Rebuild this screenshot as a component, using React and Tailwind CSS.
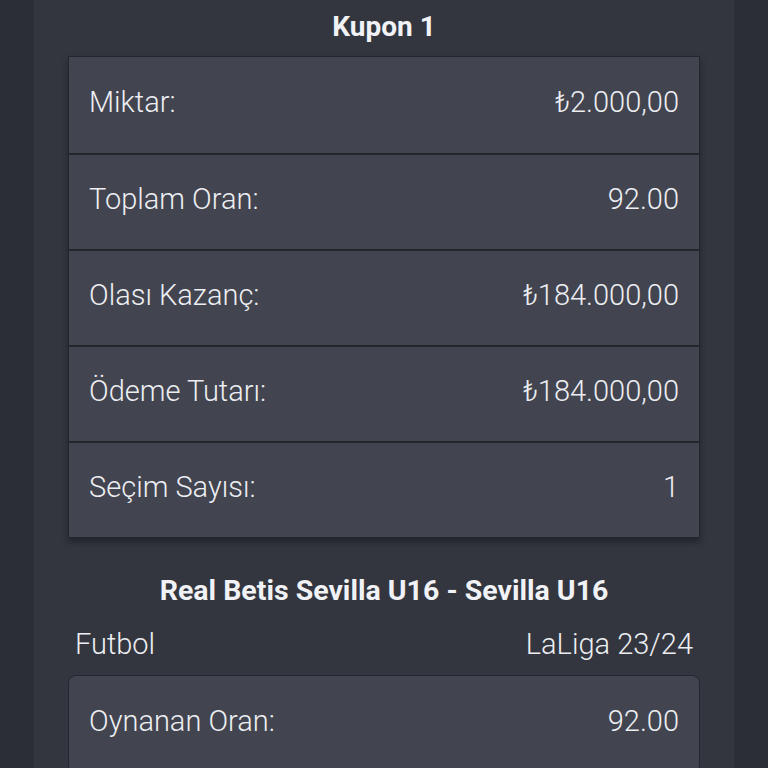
const rows = [
  { label: 'Miktar:', value: '₺2.000,00' },
  { label: 'Toplam Oran:', value: '92.00' },
  { label: 'Olası Kazanç:', value: '₺184.000,00' },
  { label: 'Ödeme Tutarı:', value: '₺184.000,00' },
  { label: 'Seçim Sayısı:', value: '1' },
];

function Row({ label, value, first }) {
  return (
    <div
      className={`flex h-[96px] items-center justify-between bg-[#42444f] px-[20px] pb-[4px] text-[29px] font-light text-[#eceef2] ${
        first ? '' : 'border-t-2 border-[#25272d]'
      }`}
    >
      <span>{label}</span>
      <span>{value}</span>
    </div>
  );
}

export default function App() {
  return (
    <div className="flex h-[768px] justify-center overflow-hidden bg-[#2b2e36] font-['Roboto',sans-serif]">
      <div className="w-[700px] bg-[#33363f] px-[34px]">
        <h2 className="pt-[7px] pb-[9px] text-center text-[28px] leading-[40px] font-bold text-[#f1f2f5]">Kupon 1</h2>
        <div className="overflow-hidden border border-[#25272d] shadow-[0_4px_6px_rgba(0,0,0,0.35)]">
          {rows.map((r, i) => (
            <Row key={r.label} label={r.label} value={r.value} first={i === 0} />
          ))}
        </div>

        <h3 className="mt-[33px] text-center text-[28.5px] leading-[40px] font-bold text-[#f1f2f5]">
          Real Betis Sevilla U16 - Sevilla U16
        </h3>
        <div className="mt-[13px] flex items-center justify-between px-[7px] text-[29px] leading-[40px] font-light text-[#eceef2]">
          <span>Futbol</span>
          <span>LaLiga 23/24</span>
        </div>
        <div className="mt-[11px] overflow-hidden rounded-lg border border-[#25272d]">
          <Row label="Oynanan Oran:" value="92.00" first />
        </div>
      </div>
    </div>
  );
}
